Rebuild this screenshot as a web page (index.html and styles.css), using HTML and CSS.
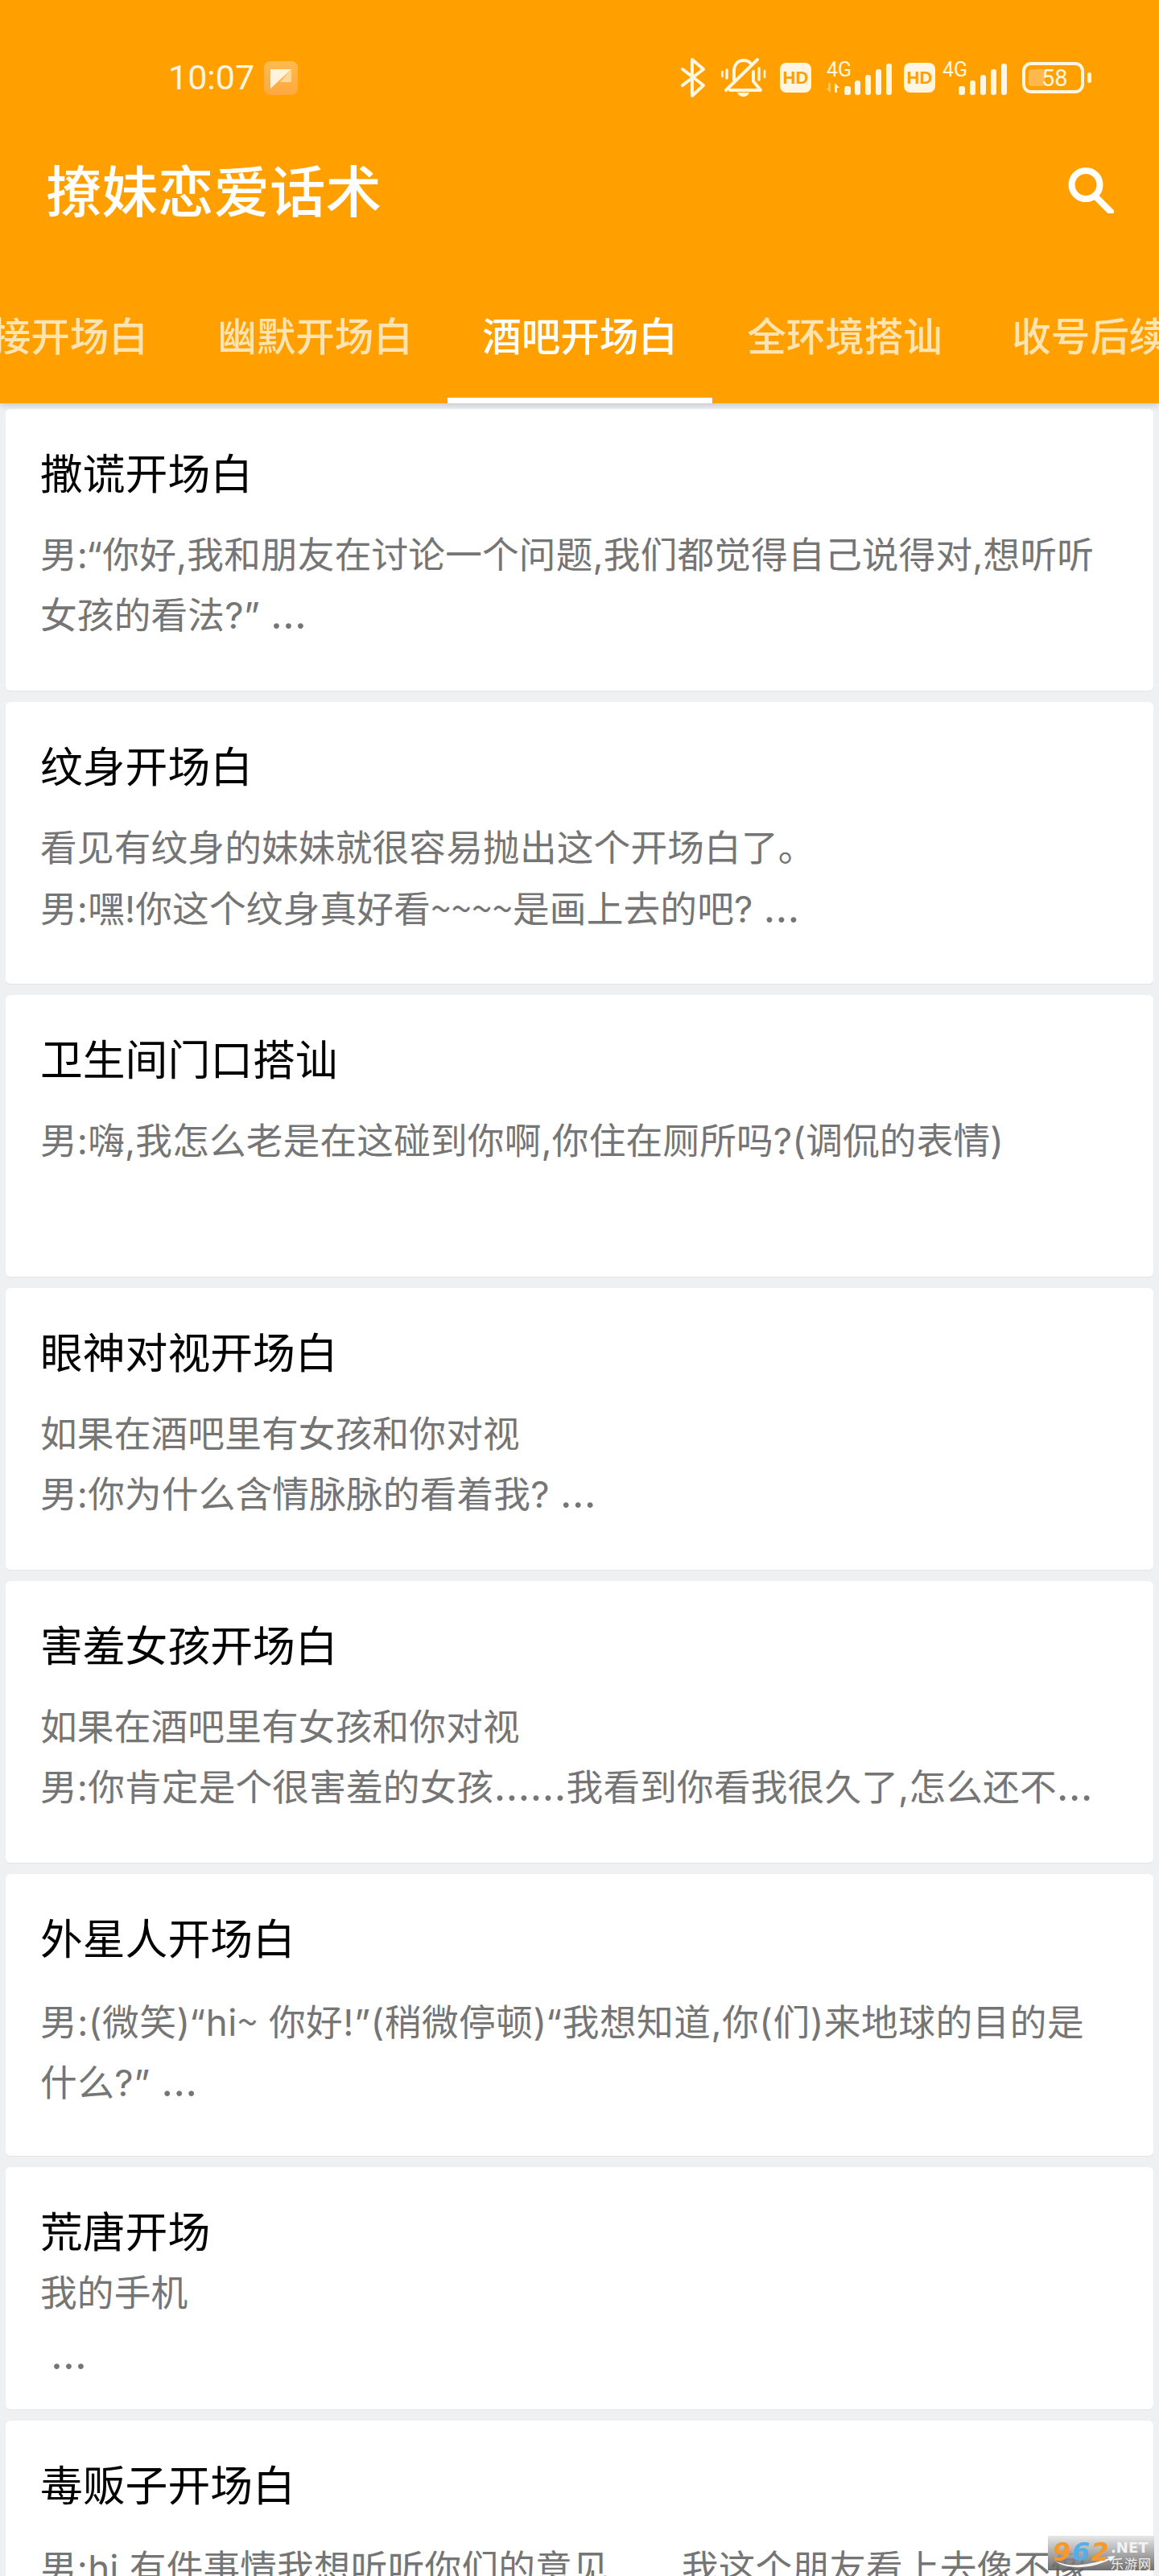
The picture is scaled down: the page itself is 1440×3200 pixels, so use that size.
FILE: index.html
```html
<!DOCTYPE html>
<html lang="zh-CN">
<head>
<meta charset="utf-8">
<title>撩妹恋爱话术</title>
<link rel="stylesheet" href="styles.css">
</head>
<body>
<div class="screen">
  <header class="appbar">
    <div class="status">
      <div class="status-left">
        <span class="clock">10:07</span>
        <svg class="gallery" width="42" height="42" viewBox="0 0 42 42"><defs><linearGradient id="gal" x1="0" y1="0" x2="0" y2="1"><stop offset="0" stop-color="#ffbb4f"/><stop offset="1" stop-color="#ffa83f"/></linearGradient></defs><rect width="42" height="42" rx="8" fill="url(#gal)"/><path d="M8 10h26L8 34z" fill="#fff3dc"/><path d="M34 10v16H20z" fill="#ffd796"/></svg>
      </div>
      <div class="status-right">
        <svg width="30" height="49" viewBox="0 0 30 49" class="ico"><path d="M2 14l26 20-14 13V2l14 12L2 34" fill="none" stroke="#fff5e0" stroke-width="4" stroke-linecap="round" stroke-linejoin="round"/></svg>
        <svg width="56" height="49" viewBox="0 0 56 49" class="ico gap-20"><g fill="none" stroke="#fff5e0" stroke-linecap="round" stroke-linejoin="round"><path d="M6 40L45 2M16 27V16C16 8 21 3 28 3c3 0 6 1 8 3M40 17v12l9 11H11" stroke-width="4"/><path d="M7 15v10M47 13v14" stroke-width="3.4"/><path d="M1.500 17v6M54 16v8" stroke-width="2.600"/></g><path d="M20 43h15c-1 3-4 5-7.500 5S21 46 20 43z" fill="#fff5e0"/></svg>
        <svg width="39" height="37" viewBox="0 0 39 37" class="ico gap-17"><rect width="39" height="37" rx="8" fill="#fff5e0"/><text x="19.500" y="26" class="hd-text">HD</text></svg>
        <svg width="83" height="42" viewBox="0 0 83 42" class="ico gap-17">
          <text x="2" y="19" class="g4">4G</text>
          <path d="M12 27l6 6h-3v6h-3z" fill="#fff5e0"/>
          <path d="M1 34h3v-7h3v12z" fill="#ffc56e"/>
          <g fill="#fff5e0"><rect x="24" y="31" width="8" height="11" rx="3"/><rect x="37" y="24" width="7" height="18" rx="3"/><rect x="50" y="17" width="7" height="25" rx="3"/><rect x="63" y="10" width="7" height="32" rx="3"/><rect x="76" y="3" width="7" height="39" rx="3"/></g>
        </svg>
        <svg width="39" height="37" viewBox="0 0 39 37" class="ico gap-15"><rect width="39" height="37" rx="8" fill="#fff5e0"/><text x="19.500" y="26" class="hd-text">HD</text></svg>
        <svg width="80" height="42" viewBox="0 0 80 42" class="ico gap-9">
          <text x="0" y="19" class="g4">4G</text>
          <g fill="#fff5e0"><rect x="20" y="31" width="8" height="11" rx="3"/><rect x="34" y="24" width="7" height="18" rx="3"/><rect x="47" y="17" width="7" height="25" rx="3"/><rect x="60" y="10" width="7" height="32" rx="3"/><rect x="73" y="3" width="7" height="39" rx="3"/></g>
        </svg>
        <svg width="86" height="39" viewBox="0 0 86 39" class="ico gap-19">
          <rect x="2" y="2" width="73" height="35" rx="9" fill="none" stroke="#fff5e0" stroke-width="4"/>
          <rect x="8" y="9" width="20" height="21" rx="4" fill="#ffb84d"/>
          <text x="24" y="30" class="bat">58</text>
          <rect x="81" y="13" width="5" height="13" rx="2.500" fill="#fff5e0"/>
        </svg>
      </div>
    </div>
    <div class="titlebar">
      <h1 class="app-title">撩妹恋爱话术</h1>
      <svg class="search" width="57" height="57" viewBox="0 0 57 57"><circle cx="22" cy="21.500" r="17.500" fill="none" stroke="#fff" stroke-width="8"/><path d="M36 38l17 17" stroke="#fff" stroke-width="8" stroke-linecap="round"/></svg>
    </div>
    <nav class="tabs">
      <span class="tab">直接开场白</span>
      <span class="tab">幽默开场白</span>
      <span class="tab tab-on">酒吧开场白</span>
      <span class="tab">全环境搭讪</span>
      <span class="tab">收号后续聊</span>
    </nav>
  </header>
  <main class="list">
    <article class="card">
      <h2 class="card-title">撒谎开场白</h2>
      <p class="card-text">男:“你好,我和朋友在讨论一个问题,我们都觉得自己说得对,想听听<br>女孩的看法?” <span class="ell">…</span></p>
    </article>
    <article class="card">
      <h2 class="card-title">纹身开场白</h2>
      <p class="card-text">看见有纹身的妹妹就很容易抛出这个开场白了。<br>男:嘿!你这个纹身真好看<span class="tilde">~~~~</span>是画上去的吧? <span class="ell">…</span></p>
    </article>
    <article class="card">
      <h2 class="card-title">卫生间门口搭讪</h2>
      <p class="card-text">男:嗨,我怎么老是在这碰到你啊,你住在厕所吗?(调侃的表情)</p>
    </article>
    <article class="card">
      <h2 class="card-title">眼神对视开场白</h2>
      <p class="card-text">如果在酒吧里有女孩和你对视<br>男:你为什么含情脉脉的看着我? <span class="ell">…</span></p>
    </article>
    <article class="card">
      <h2 class="card-title">害羞女孩开场白</h2>
      <p class="card-text">如果在酒吧里有女孩和你对视<br>男:你肯定是个很害羞的女孩<span class="ell">……</span>我看到你看我很久了,怎么还不<span class="ell">…</span></p>
    </article>
    <article class="card">
      <h2 class="card-title">外星人开场白</h2>
      <p class="card-text card-text-loose">男:(微笑)“hi<span class="tilde">~</span> 你好!”(稍微停顿)“我想知道,你(们)来地球的目的是<br>什么?” <span class="ell">…</span></p>
    </article>
    <article class="card card-short">
      <h2 class="card-title">荒唐开场</h2>
      <p class="card-text">我的手机<br>&nbsp;<span class="ell">…</span></p>
    </article>
    <article class="card">
      <h2 class="card-title">毒贩子开场白</h2>
      <p class="card-text">男:hi,有件事情我想听听你们的意见<span class="ell">……</span>我这个朋友看上去像不像</p>
    </article>
  </main>
  <aside class="watermark">
    <svg class="wm-swoosh" width="132" height="43" viewBox="0 0 132 43"><path d="M8 31c14 7 36 8 68-3l-3-2 11-1-6 7-2-2C50 43 20 41 8 31z" fill="#f4f4f4"/></svg>
    <span class="wm-num"><i class="o">9</i><i class="b">6</i><i class="o">2</i></span>
    <span class="wm-side"><b class="wm-net">.NET</b><em class="wm-cn">乐游网</em></span>
  </aside>
</div>
</body>
</html>
```
FILE: styles.css
```css
* { box-sizing: border-box; }
html, body { margin: 0; padding: 0; }
body {
  width: 1440px;
  height: 3200px;
  overflow: hidden;
  background: #eff0f2;
  font-family: Inter, "Noto Sans CJK SC", sans-serif;
}
.screen { position: relative; height: 3200px; overflow: hidden; }
.appbar { height: 501px; background: #ffa000; box-shadow: 0 3px 7px rgba(0,0,0,.16); position: relative; z-index: 1; }
.status { height: 190px; padding: 66px 84px 0 209px; display: flex; justify-content: space-between; align-items: flex-start; }
.status-left { display: flex; align-items: center; gap: 12px; height: 61px; }
.clock { font-family: Roboto, sans-serif; font-size: 43px; line-height: 61px; color: #fff5e0; }
.status-right { display: flex; align-items: center; height: 61px; }
.ico { flex: none; display: block; overflow: visible; }
.gap-9 { margin-left: 9px; }
.gap-15 { margin-left: 15px; }
.gap-17 { margin-left: 17px; }
.gap-19 { margin-left: 19px; }
.gap-20 { margin-left: 20px; }
.hd-text { font-family: "Liberation Sans", sans-serif; font-weight: 700; font-size: 22px; text-anchor: middle; fill: #ffa000; }
.g4 { font-family: Roboto, sans-serif; font-size: 25px; fill: #fff5e0; }
.bat { font-family: Roboto, sans-serif; font-size: 29px; fill: #fff5e0; }
.titlebar { height: 96px; display: flex; align-items: center; justify-content: space-between; padding: 0 56px 0 57px; margin-top: 1px; }
.app-title { margin: 0; font-size: 69.500px; line-height: 96px; font-weight: 500; color: #fff; }
.search { flex: none; margin-top: -6px; }
.tabs { display: flex; height: 214px; padding-top: 102px; margin-left: -102px; white-space: nowrap; }
.tab { flex: none; width: 329px; text-align: center; font-size: 48.500px; line-height: 60px; font-weight: 500; color: #ffe3b0; height: 112px; }
.tab-on { color: #fff; border-bottom: 7px solid #fff; }
.list { padding: 7px 7px 0 7px; display: flex; flex-direction: column; gap: 14px; }
.card { flex: none; height: 350px; background: #fff; border-radius: 6px; padding: 45px 43px 0 43px; box-shadow: 0 1px 1px rgba(0,0,0,.05); }
.card-short { height: 301px; }
.card-title { margin: 0; font-size: 52.800px; line-height: 72px; font-weight: 400; color: #000; }
.card-text { margin: 28px 0 0; font-size: 45.700px; line-height: 73px; letter-spacing: .15px; color: #757575; white-space: nowrap; }
.card-text-loose { letter-spacing: .5px; }
.card-short .card-text { margin-top: 2px; line-height: 76px; }
.ell { font-size: 52px; }
.tilde { font-family: "Noto Sans CJK SC", sans-serif; }
.watermark { position: absolute; left: 1302px; top: 3150px; width: 132px; height: 43px; background: linear-gradient(rgba(228,228,228,.88), rgba(90,90,90,.88)); display: flex; padding: 2px 0 0 6px; }
.wm-swoosh { position: absolute; left: 0; top: 0; }
.wm-num { position: relative; flex: none; width: 72px; font-family: "DejaVu Sans", sans-serif; font-size: 32px; line-height: 36px; font-weight: 700; letter-spacing: 1.500px; }
.wm-num i { font-style: italic; }
.o { color: #f7982a; }
.b { color: #55aee8; }
.wm-side { position: relative; display: flex; flex-direction: column; }
.wm-net { font-family: "DejaVu Sans", sans-serif; font-size: 18px; line-height: 26px; font-weight: 700; color: #f2f2f2; letter-spacing: 0; }
.wm-cn { font-style: normal; font-size: 16px; line-height: 14px; color: #eee; letter-spacing: 1px; }
```
